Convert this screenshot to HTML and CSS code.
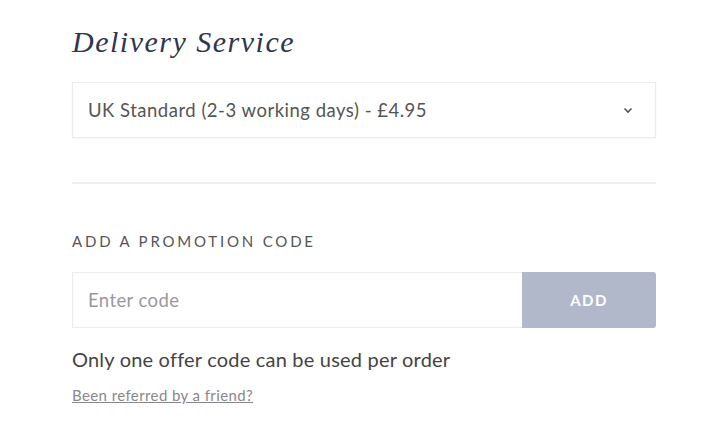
FILE: index.html
```html
<!DOCTYPE html>
<html>
<head>
<meta charset="utf-8">
<link rel="stylesheet" href="styles.css">
</head>
<body>
<div class="panel">
  <h2 class="title">Delivery Service</h2>
  <div class="select">
    <span class="select-text">UK Standard (2-3 working days) - £4.95</span>
    <svg class="chev" width="10" height="7" viewBox="0 0 10 7"><path d="M1.5 1.5 L5 5 L8.5 1.5" fill="none" stroke="#555" stroke-width="1.6"/></svg>
  </div>
  <hr class="divider">
  <div class="label">ADD A PROMOTION CODE</div>
  <div class="promo">
    <div class="input">Enter code</div>
    <div class="btn">ADD</div>
  </div>
  <p class="note">Only one offer code can be used per order</p>
  <a class="ref" href="#">Been referred by a friend?</a>
</div>
</body>
</html>
```
FILE: styles.css
```css
html, body { margin: 0; padding: 0; background: #fff; }
body { font-family: "Lato", "Open Sans", sans-serif; color: #4a4a4a; }
.panel { width: 584px; margin-left: 72px; padding-top: 24px; display: flex; flex-direction: column; }
.title { margin: 0; font-family: "Liberation Serif", serif; font-style: italic; font-weight: normal; font-size: 30px; letter-spacing: 1.5px; color: #2f3650; line-height: 36px; height: 36px; }
.select { margin-top: 22px; height: 54px; border: 1px solid #ececec; box-shadow: 0 1px 2px rgba(0,0,0,0.04); display: flex; align-items: center; justify-content: space-between; padding: 0 22px 0 15px; }
.select-text { font-size: 18.5px; letter-spacing: 0.5px; color: #555; }
.chev { display: block; }
.divider { margin: 44px 0 0; border: 0; border-top: 2px solid #efefef; height: 0; }
.label { margin-top: 48px; font-size: 15px; letter-spacing: 2.8px; color: #555; line-height: 18px; }
.promo { margin-top: 22px; height: 56px; display: flex; }
.input { flex: 1; border: 1px solid #ececec; border-right: 0; display: flex; align-items: center; padding-left: 15px; font-size: 18.5px; letter-spacing: 0.4px; color: #999; }
.btn { width: 134px; background: #b1b8ca; border-radius: 0 3px 3px 0; color: #fff; font-weight: bold; font-size: 15px; letter-spacing: 1.5px; display: flex; align-items: center; justify-content: center; }
.note { margin: 18px 0 0; font-size: 20px; letter-spacing: 0.2px; color: #444; line-height: 26px; }
.ref { margin-top: 14px; font-size: 15px; letter-spacing: 0.4px; color: #888; text-decoration: underline; align-self: flex-start; }
```
